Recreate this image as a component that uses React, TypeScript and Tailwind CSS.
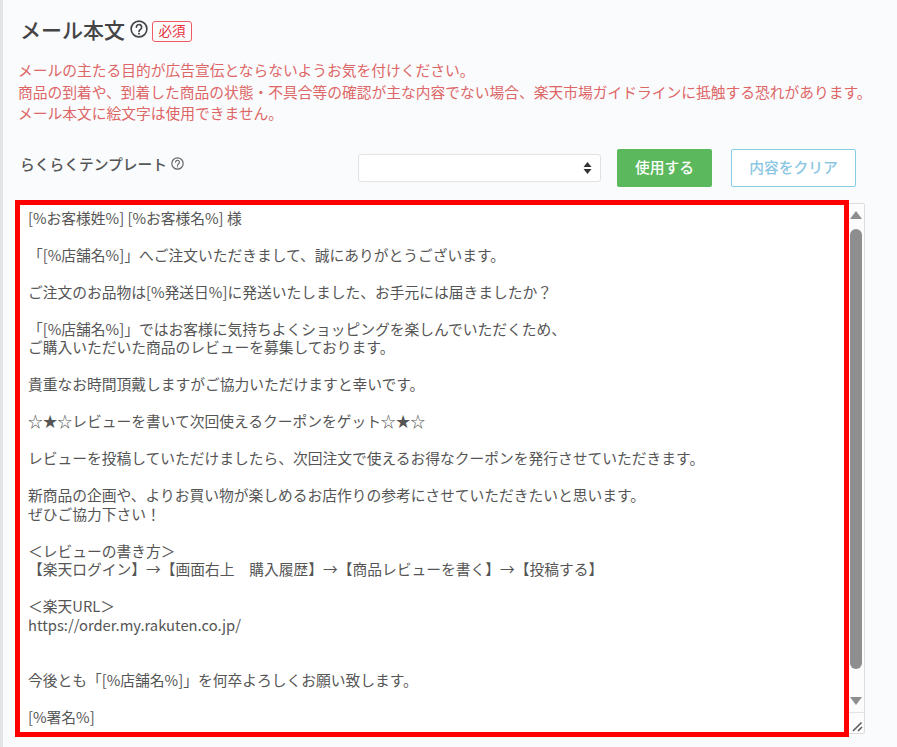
const FONT = "font-['Noto_Sans_CJK_JP','Noto_Sans',sans-serif]"

const bodyLines = [
  '[%お客様姓%] [%お客様名%] 様',
  '',
  '「[%店舗名%]」へご注文いただきまして、誠にありがとうございます。',
  '',
  'ご注文のお品物は[%発送日%]に発送いたしました、お手元には届きましたか？',
  '',
  '「[%店舗名%]」ではお客様に気持ちよくショッピングを楽しんでいただくため、',
  'ご購入いただいた商品のレビューを募集しております。',
  '',
  '貴重なお時間頂戴しますがご協力いただけますと幸いです。',
  '',
  '☆★☆レビューを書いて次回使えるクーポンをゲット☆★☆',
  '',
  'レビューを投稿していただけましたら、次回注文で使えるお得なクーポンを発行させていただきます。',
  '',
  '新商品の企画や、よりお買い物が楽しめるお店作りの参考にさせていただきたいと思います。',
  'ぜひご協力下さい！',
  '',
  '＜レビューの書き方＞',
  '【楽天ログイン】→【画面右上　購入履歴】→【商品レビューを書く】→【投稿する】',
  '',
  '＜楽天URL＞',
  'https://order.my.rakuten.co.jp/',
  '',
  '',
  '今後とも「[%店舗名%]」を何卒よろしくお願い致します。',
  '',
  '[%署名%]',
]

const HelpIcon = ({ size, color }: { size: number; color: string }) => (
  <svg width={size} height={size} viewBox="0 0 24 24" fill="none" stroke={color} strokeWidth="2.2">
    <circle cx="12" cy="12" r="10.5" />
    <path d="M8.5 9.5a3.5 3.5 0 1 1 5.6 2.8c-1.3.9-2.1 1.5-2.1 3" strokeLinecap="round" />
    <circle cx="12" cy="18.2" r="1.3" fill={color} stroke="none" />
  </svg>
)

export default function App() {
  return (
    <div className={`${FONT} h-[747px] w-[897px] overflow-hidden border-l-[3px] border-[#e4e4e4] bg-[#fafbfd] pl-[14px]`}>
      {/* 見出し */}
      <div className="flex h-[59px] items-center pl-[3px]">
        <h2 className="-mt-[1px] text-[21px] leading-none font-medium text-[#444]">メール本文</h2>
        <span className="-mt-[1px] ml-[5px]">
          <HelpIcon size={18} color="#444" />
        </span>
        <span className="mt-[3px] ml-[4px] flex h-[21px] w-[40px] items-center justify-center rounded-[3px] border border-[#ef5a63] text-[13.5px] leading-none text-[#e8323c]">
          必須
        </span>
      </div>

      {/* 注意文 */}
      <div className="pl-[1px] text-[14.75px] leading-[21.5px] whitespace-nowrap text-[#dd6666]">
        <p>メールの主たる目的が広告宣伝とならないようお気を付けください。</p>
        <p>商品の到着や、到着した商品の状態・不具合等の確認が主な内容でない場合、楽天市場ガイドラインに抵触する恐れがあります。</p>
        <p>メール本文に絵文字は使用できません。</p>
      </div>

      {/* テンプレート */}
      <div className="mt-[25px] flex h-[38px] items-start pl-[3px]">
        <div className="flex w-[338px] items-center pt-[5px]">
          <span className="text-[14.75px] leading-[20px] font-medium text-[#555]">らくらくテンプレート</span>
          <span className="ml-[4px]">
            <HelpIcon size={13} color="#666" />
          </span>
        </div>
        <div className="mt-[5px] flex h-[28px] w-[243px] items-center justify-end rounded-[3px] border-[1.5px] border-[#e2e2e2] bg-white pr-[8px]">
          <svg width="9" height="14" viewBox="0 0 9 14" fill="#333">
            <path d="M4.5 1 8.5 6H.5zM4.5 13 .5 8h8z" />
          </svg>
        </div>
        <button className="ml-[16px] h-[38px] w-[95px] rounded-[2px] bg-[#5cb85c] text-[14.75px] font-medium text-white">使用する</button>
        <button className="ml-[19px] h-[38px] w-[125px] rounded-[2px] border-[1.5px] border-[#85cfe6] bg-white text-[14.75px] font-medium text-[#8cc6e2]">
          内容をクリア
        </button>
      </div>

      {/* 本文エリア */}
      <div className="relative mt-[16px] h-[537px] w-[834px]">
        <div className="flex h-[531px] w-[848px] rounded-[2px] border border-[#ddd] bg-white">
          <div className="flex-1 overflow-hidden pt-[5px] pl-[10px] text-[14.75px] leading-[18.52px] whitespace-pre text-[#555]">
            {bodyLines.map((line, i) => (
              <div key={i} className="h-[18.52px]">
                {line}
              </div>
            ))}
          </div>
          <div className="flex w-[16px] flex-col items-center bg-[#fcfcfc]">
            <div className="mt-[7px] h-0 w-0 border-x-[6px] border-b-[8px] border-x-transparent border-b-[#8e8e8e]" />
            <div className="mt-[10px] h-[440px] w-[12px] rounded-[6px] bg-[#8e8e8e]" />
            <div className="mt-[28px] h-0 w-0 border-x-[6px] border-t-[8px] border-x-transparent border-t-[#8e8e8e]" />
            <div className="mt-[7px] flex h-[21px] w-full items-end justify-end border-t border-[#e4e4e4] pr-[1px] pb-[1px]">
              <svg width="11" height="11" viewBox="0 0 11 11" stroke="#555" strokeWidth="1.5">
                <path d="M1 10 9.5 1.5M6 10l4-4" />
              </svg>
            </div>
          </div>
        </div>
        {/* 赤枠の注釈 */}
        <div className="pointer-events-none absolute top-[-3px] left-[-2px] h-[537px] w-[834px] border-[5px] border-[#ff0000]" />
      </div>
    </div>
  )
}
